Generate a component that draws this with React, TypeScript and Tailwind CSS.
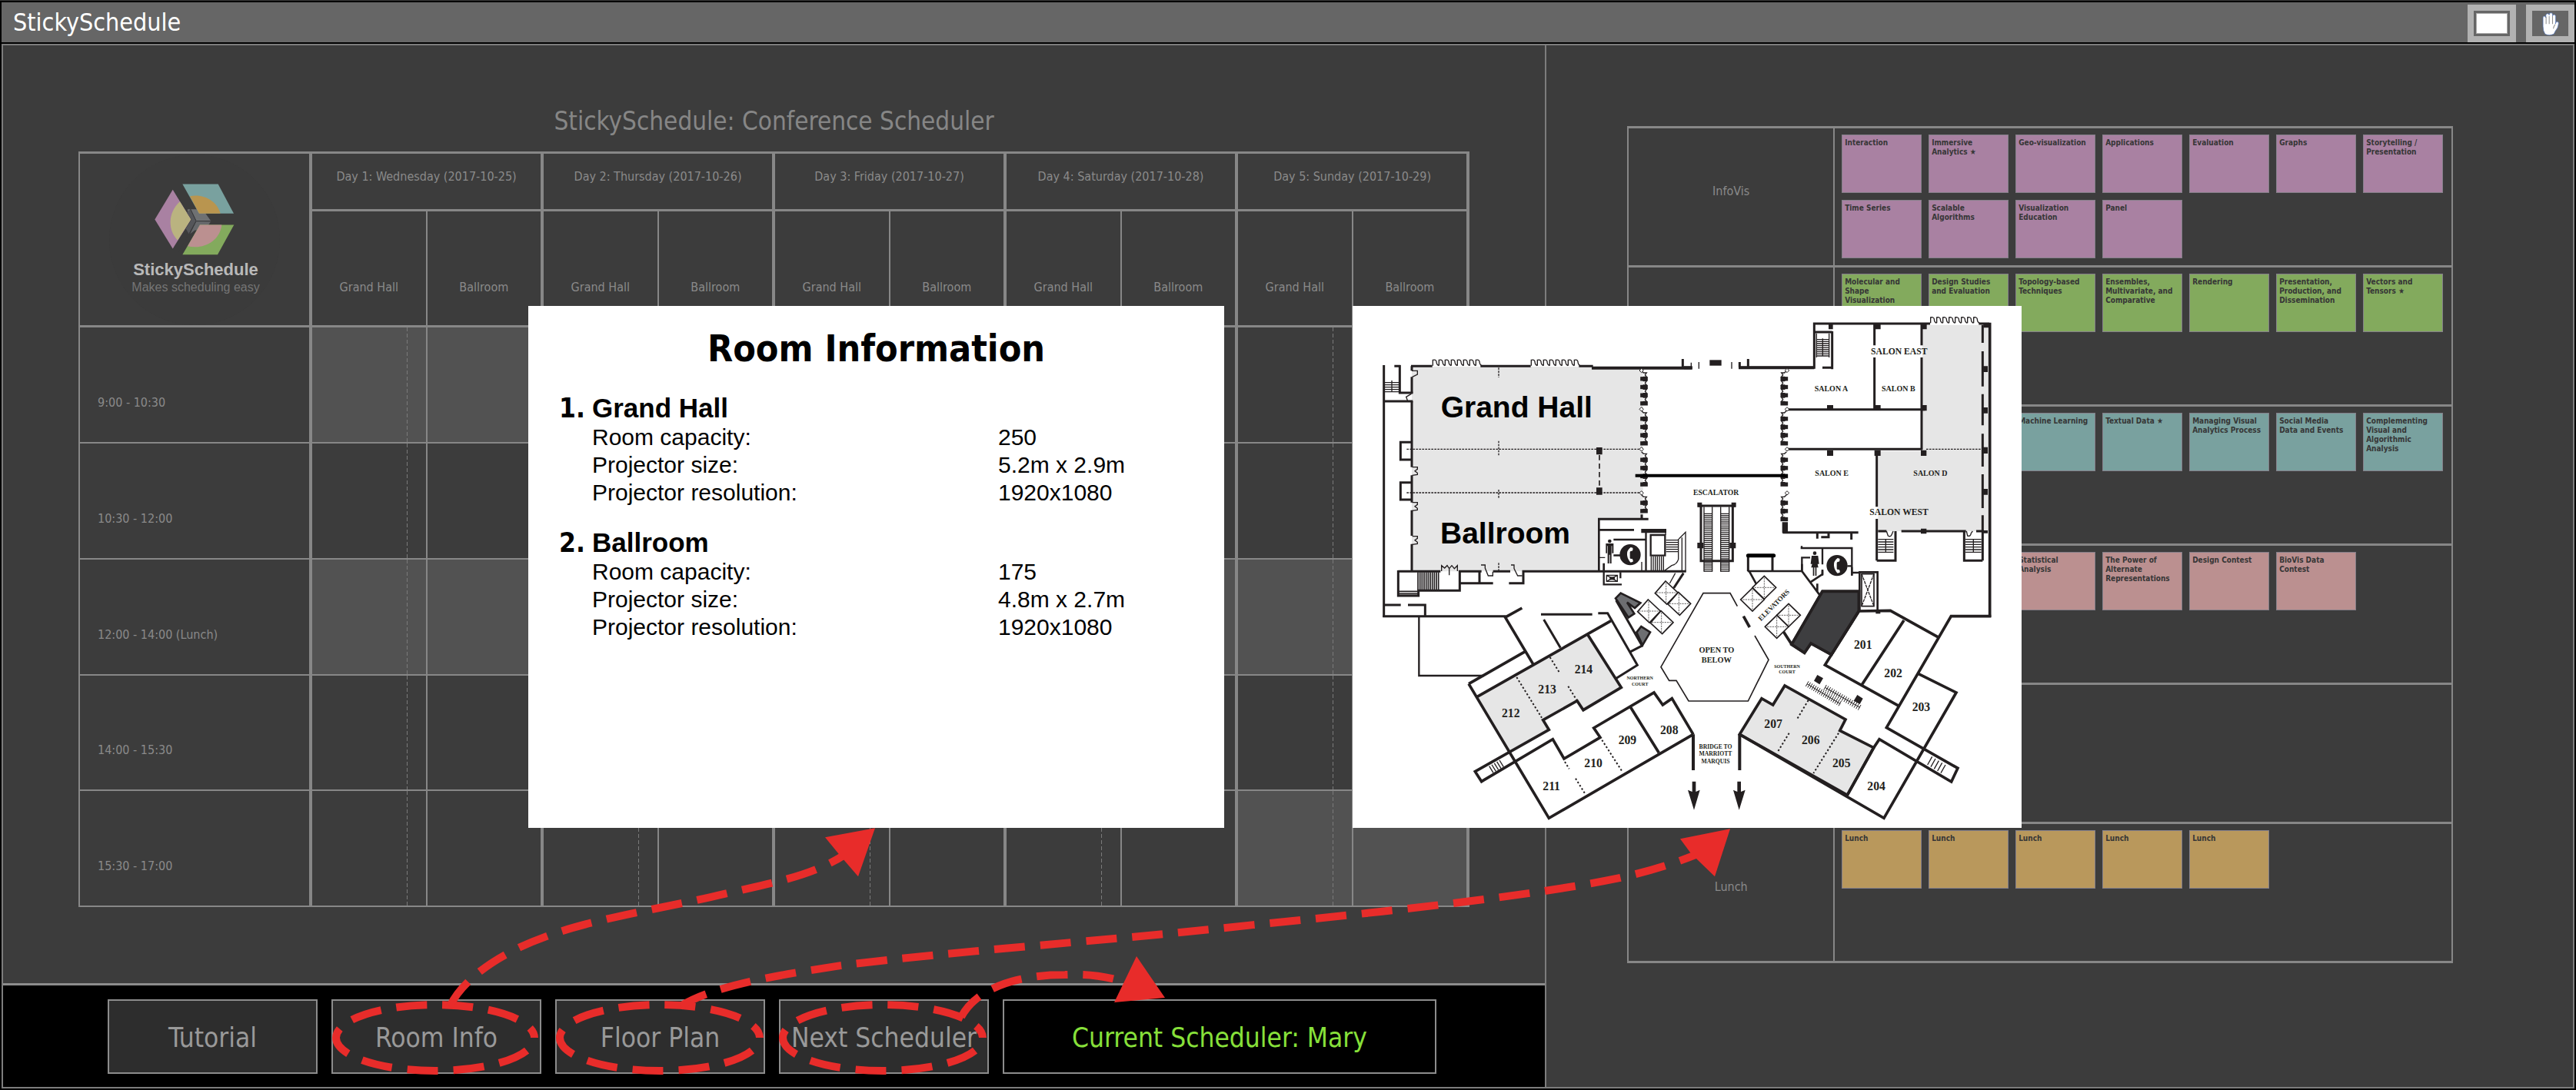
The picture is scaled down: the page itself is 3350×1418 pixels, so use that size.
import React from "react";

const INK = "#231f20";
const SHADE = "#e6e6e6";
const RED = "#e82c2a";

const days = [
  "Day 1: Wednesday (2017-10-25)",
  "Day 2: Thursday (2017-10-26)",
  "Day 3: Friday (2017-10-27)",
  "Day 4: Saturday (2017-10-28)",
  "Day 5: Sunday (2017-10-29)",
];

const slots = [
  { time: "9:00 - 10:30", blocked: [0] },
  { time: "10:30 - 12:00", blocked: [] },
  { time: "12:00 - 14:00 (Lunch)", blocked: [0, 1, 2, 3, 4] },
  { time: "14:00 - 15:30", blocked: [] },
  { time: "15:30 - 17:00", blocked: [4] },
];

const topics = [
  {
    label: "InfoVis",
    color: "bg-[#a981a2]",
    notes: [
      "Interaction", "Immersive Analytics ★", "Geo-visualization", "Applications", "Evaluation", "Graphs",
      "Storytelling / Presentation", "Time Series", "Scalable Algorithms", "Visualization Education", "Panel",
    ],
  },
  {
    label: "",
    color: "bg-[#83aa5d]",
    notes: [
      "Molecular and Shape Visualization", "Design Studies and Evaluation", "Topology-based Techniques",
      "Ensembles, Multivariate, and Comparative", "Rendering", "Presentation, Production, and Dissemination",
      "Vectors and Tensors ★",
    ],
  },
  {
    label: "",
    color: "bg-[#79a19f]",
    notes: [
      "", "", "Machine Learning", "Textual Data ★", "Managing Visual Analytics Process",
      "Social Media\nData and Events", "Complementing Visual and Algorithmic Analysis",
    ],
  },
  {
    label: "",
    color: "bg-[#bb9090]",
    notes: ["", "", "Statistical Analysis", "The Power of Alternate Representations", "Design Contest", "BioVis Data Contest"],
  },
  { label: "", color: "", notes: [] },
  { label: "Lunch", color: "bg-[#b9985c]", notes: ["Lunch", "Lunch", "Lunch", "Lunch", "Lunch"] },
];

const rooms = [
  { name: "Grand Hall", facts: [["Room capacity:", "250"], ["Projector size:", "5.2m x 2.9m"], ["Projector resolution:", "1920x1080"]] },
  { name: "Ballroom", facts: [["Room capacity:", "175"], ["Projector size:", "4.8m x 2.7m"], ["Projector resolution:", "1920x1080"]] },
];

function Logo() {
  return (
    <svg viewBox="155 65 330 284" className="h-[95px] w-[110px]" aria-hidden="true">
      <path d="M287 167h58l33 46-28 2h-70z" fill="#6f7173" />
      <path d="M298 167l22 46-28 50-24-18 14-60z" fill="#55565a" />
      <path d="M320 215h57l-22 34h-40l-18 14z" fill="#66686b" />
      <path d="M298 167l22 46h57M320 213l-26 48" fill="none" stroke="#3a3a3c" strokeWidth="3" />
      <path d="M256 122L316 222 248 340z" fill="#3b3b3b" />
      <path d="M229 91L300 207 229 321 159 207z" fill="#a981a2" />
      <path d="M257 137L300 207 248 288C210 250 208 180 257 137z" fill="#bab380" />
      <path d="M284 180l14-13 22 46-28 50-12-20 22-36z" fill="#55565a" />
      <path d="M298 167l22 46-26 48" fill="none" stroke="#3a3a3c" strokeWidth="3" />
      <path d="M267 69H406L467 184H332z" fill="#79a19f" />
      <path d="M296 116C350 105 402 135 415 184H332z" fill="#b9954f" />
      <path d="M335 228H468L404 344H267z" fill="#83aa5d" />
      <path d="M335 228H420C412 295 345 325 287 311z" fill="#bb9090" />
    </svg>
  );
}

function HandIcon() {
  return (
    <svg viewBox="343 42 74 92" className="h-[31px] w-[25px]" aria-hidden="true">
      <path
        d="M352 66q0-6 5-6t6 6V56q1-6 7-6t6 6v-3q1-6 7-6t6 6v6q1-5 6-5t6 6v24l-1 6q1-9 7-9t5 8q-1 16-12 28l-6 12q-10 4-18 4t-16-4q-8-12-8-30z"
        fill="#fff" stroke="#4a6fb5" strokeWidth="2"
      />
      <path d="M364 62v28M376 60v30M389 60v30M399 92q-6 6-7 16" fill="none" stroke="#8a8a8a" strokeWidth="3" />
    </svg>
  );
}

function Schedule() {
  return (
    <table className="h-[983px] w-full table-fixed border-collapse border-2 border-t-3 border-[#878787] text-[16px] leading-[22px] text-[#8a8a8a]">
      <colgroup>
        <col className="w-1/6" />
        {days.map((d) => (
          <React.Fragment key={d}>
            <col className="w-1/12" />
            <col className="w-1/12" />
          </React.Fragment>
        ))}
      </colgroup>
      <thead>
        <tr className="h-[75px]">
          <td rowSpan={2} className="border-r-4 border-b-3 border-[#878787] p-0">
            <div className="mx-auto flex size-[222px] flex-col items-center rounded-full bg-[#3b3b3b] pt-[37px] pl-[3px] font-['Liberation_Sans',sans-serif]">
              <Logo />
              <span className="mt-[4px] text-[22px] leading-[28px] font-bold text-[#b9b9b9]">StickySchedule</span>
              <span className="text-[16px] leading-[18px] text-[#757575]">Makes scheduling easy</span>
            </div>
          </td>
          {days.map((d) => (
            <th key={d} colSpan={2} scope="colgroup" className="border-x-4 border-b-3 border-[#878787] px-0 pt-0 pb-[12px] font-normal">
              {d}
            </th>
          ))}
        </tr>
        <tr className="h-[151px]">
          {days.map((d) => (
            <React.Fragment key={d}>
              <th scope="col" className="border-r-2 border-b-3 border-l-4 border-[#878787] px-0 pt-0 pb-[38px] align-bottom font-normal">Grand Hall</th>
              <th scope="col" className="border-r-4 border-b-3 border-l-2 border-[#878787] px-0 pt-0 pb-[38px] align-bottom font-normal">Ballroom</th>
            </React.Fragment>
          ))}
        </tr>
      </thead>
      <tbody>
        {slots.map((s) => (
          <tr key={s.time}>
            <th scope="row" className="border-r-4 border-b-2 border-[#878787] pt-0 pr-0 pb-[40px] pl-[23px] text-left align-bottom font-normal">
              {s.time}
            </th>
            {days.map((d, i) => {
              const bg = s.blocked.some((b) => b === i) ? "bg-[#525252]" : "";
              return (
                <React.Fragment key={d}>
                  <td className={`relative border-r-2 border-b-2 border-l-4 border-[#878787] p-0 ${bg}`}>
                    <span className="absolute inset-y-0 right-[24px] w-px bg-[repeating-linear-gradient(#7a7a7a_0_5px,transparent_5px_8px)]" />
                  </td>
                  <td className={`border-r-4 border-b-2 border-l-2 border-[#878787] p-0 ${bg}`} />
                </React.Fragment>
              );
            })}
          </tr>
        ))}
      </tbody>
    </table>
  );
}

function Topics() {
  return (
    <table className="w-full table-fixed border-collapse border-2 border-t-3 border-[#878787]">
      <colgroup>
        <col className="w-1/4" />
        <col />
      </colgroup>
      <tbody>
        {topics.map((t, i) => (
          <tr key={i} className="h-[181px]">
            <th scope="row" className="border-r-2 border-b-3 border-[#878787] px-0 pt-0 pb-[14px] text-[16px] leading-[22px] font-normal text-[#8a8a8a]">
              {t.label}
            </th>
            <td className="border-b-3 border-[#878787] p-0 align-top">
              <ul className="flex flex-wrap gap-[9px] pt-[8px] pl-[9px]">
                {t.notes.map((n, j) => (
                  <li key={j} className={`h-[76px] w-[104px] border border-[#85808a] px-[3px] pt-[4px] text-[10px] leading-[12px] font-bold whitespace-pre-line text-[#363636] ${t.color}`}>
                    {n}
                  </li>
                ))}
              </ul>
            </td>
          </tr>
        ))}
      </tbody>
    </table>
  );
}

function RoomInformation() {
  return (
    <section className="absolute top-[397px] left-[687px] h-[679px] w-[905px] bg-white px-[40px] pt-[22px] font-['Liberation_Sans',sans-serif] text-black">
      <h2 className="text-center font-['DejaVu_Sans_Condensed','Noto_Sans',sans-serif] text-[48px] leading-[66px] font-bold">Room Information</h2>
      <ol className="mt-[25px] flex flex-col gap-[27px]">
        {rooms.map((r, i) => (
          <li key={r.name} className="grid grid-cols-[43px_1fr]">
            <span className="font-['DejaVu_Sans_Condensed','Noto_Sans',sans-serif] text-[35px] leading-[40px] font-bold">{i + 1}.</span>
            <div>
              <h3 className="text-[35px] leading-[40px] font-bold">{r.name}</h3>
              <dl className="grid grid-cols-[528px_1fr] text-[30px] leading-[36px]">
                {r.facts.map(([k, v]) => (
                  <React.Fragment key={k}>
                    <dt>{k}</dt>
                    <dd>{v}</dd>
                  </React.Fragment>
                ))}
              </dl>
            </div>
          </li>
        ))}
      </ol>
    </section>
  );
}

/* Row of folding doors along a horizontal wall. */
function doorsH(x: number, y: number, n: number) {
  let d = "";
  for (let i = 0; i < n; i++) {
    d += `M${x + i * 24} ${y}v-22q12-3 14 6q0 12 9 16`;
  }
  return d;
}

/* Row of folding doors along a vertical wall; dir flips the swing side. */
function doorsV(x: number, y0: number, y1: number, dir: number) {
  let d = "";
  for (let y = y0; y + 30 <= y1; y += 32) {
    d += `M${x} ${y}l${dir * 8} 8h${dir * 12}l${-dir * 6} 8l${dir * 6} 8h${-dir * 12}l${-dir * 8} 6`;
  }
  return d;
}

function blocksV(x: number, y0: number, y1: number) {
  const out: number[] = [];
  for (let y = y0 + 28; y + 10 <= y1; y += 32) out.push(y);
  return out.map((y) => <rect key={y} x={x} y={y} width="20" height="7" fill={INK} />);
}

function rungsH(x0: number, x1: number, y0: number, y1: number, step: number) {
  let d = "";
  for (let y = y0; y <= y1; y += step) d += `M${x0} ${y}H${x1}`;
  return d;
}

function rungsV(x0: number, x1: number, y0: number, y1: number, step: number) {
  let d = "";
  for (let x = x0; x <= x1; x += step) d += `M${x} ${y0}V${y1}`;
  return d;
}

/* Evenly spaced ticks of vector (tx, ty) from one point to another. */
function ticks(x0: number, y0: number, x1: number, y1: number, tx: number, ty: number, n: number) {
  let d = "";
  for (let i = 0; i <= n; i++) {
    d += `M${x0 + ((x1 - x0) * i) / n} ${y0 + ((y1 - y0) * i) / n}l${tx} ${ty}`;
  }
  return d;
}

function Lift({ x, y, flip }: { x: number; y: number; flip?: boolean }) {
  return (
    <g fill="none" stroke={INK}>
      <path
        d={flip ? `M${x} ${y - 45}L${x + 46} ${y}L${x} ${y + 45}L${x - 46} ${y}Z` : `M${x - 2} ${y - 45}L${x + 46} ${y}L${x + 3} ${y + 45}L${x - 43} ${y + 2}Z`}
        fill="#fff" strokeWidth="5"
      />
      <path d={`M${x} ${y - 38}V${y + 38}M${x - 38} ${y}H${x + 38}`} strokeWidth="2" strokeDasharray="7 3" />
    </g>
  );
}

function Phone({ x, y }: { x: number; y: number }) {
  return (
    <g>
      <circle cx={x} cy={y} r="41" fill={INK} />
      <path d={`M${x + 2} ${y - 29}q-16 12-14 30t14 29l9-3q2-8-4-12q-6 3-8-3v-22q2-7 8-4q6-5 3-13z`} fill="#fff" />
    </g>
  );
}

type L = [string, number, number, number];

function Labels({ items, anchor }: { items: L[]; anchor: "start" | "middle" }) {
  return (
    <g fill={INK} fontFamily="'Liberation Serif', serif" fontWeight="700" textAnchor={anchor}>
      {items.map(([t, x, y, s]) => (
        <text key={t + x + y} x={x} y={y} fontSize={s}>{t}</text>
      ))}
    </g>
  );
}

/* The drawing uses three units per screen pixel and is split in four quadrants. */
function FloorPlan() {
  return (
    <section aria-label="Floor plan" className="absolute top-[397px] left-[1759px] h-[679px] w-[870px] bg-white">
      <svg viewBox="27 21 2610 2037" className="h-full w-full">
        {/* north-west */}
        <g fill="none" stroke={INK} strokeWidth="9">
          <path d="M258 258H960L1160 264V850H986V1057H258z" fill={SHADE} stroke="none" />
          <path d="M149 252V1236M190 256h24M211 252V360H262M149 393H262M1315 228v34" />
          <path d="M255 256H338M526 256H722M910 256H965M258 256v18M258 298v64M258 393V650M258 682V788M258 818V918M258 950V1057" />
          <path d="M960 263H1352" strokeWidth="12" />
          <path d={rungsH(150, 208, 320, 356, 9) + "M180 312V358"} strokeWidth="4" />
          <path d={doorsH(340, 254, 8) + doorsH(724, 254, 8)} strokeWidth="4" />
          <path d="M258 274h22v14l-20 10M256 364l-20 12 6 16M260 650h20v8l-10 7 10 8v6l-20 3M260 788h20v8l-10 7 10 8v6l-20 3M260 920h20v8l-10 7 10 8v6l-20 3" strokeWidth="4" />
          <path d="M256 553H214V621H256M256 710H214V777H256" />
          <path d="M238 580H1150M238 750H1150M597 262V300M597 548V608M597 738V772M597 1024V1054" strokeWidth="4" strokeDasharray="8 4" />
          <path d="M990 603V730" strokeWidth="5" strokeDasharray="20 13" />
          <path d="M978 573h23v28h-23zM978 730h23v28h-23z" fill={INK} stroke="none" />
          <path d={doorsV(1154, 274, 420, 1) + doorsV(1154, 430, 575, 1) + doorsV(1154, 590, 745, 1) + doorsV(1154, 758, 850, 1)} strokeWidth="4" />
          {blocksV(1154, 274, 420)}
          {blocksV(1154, 430, 575)}
          {blocksV(1154, 590, 745)}
          {blocksV(1154, 758, 850)}
          <path d="M1154 265l8 8-8 8-8-8zM1154 416l8 8-8 8-8-8zM1154 572l8 8-8 8-8-8zM1154 743l8 8-8 8-8-8z" fill="#fff" strokeWidth="3" />
          <path d="M1155 835V852" />
        </g>
        <g fill={INK}>
          <path d="M986 850h334v208H986z" fill="#fff" />
          <path d="M984 848h197v9H992v201h-8zM990 891h135v8H990zM1045 929h125v8h-125zM1153 891h98v16h-98zM1168 905h7v150h-7z" />
          <path d="M1190 915h56v80h-56z" fill="none" stroke={INK} strokeWidth="7" />
          <path d={rungsV(1192, 1240, 998, 1054, 8) + rungsH(1250, 1296, 935, 986, 9)} stroke={INK} strokeWidth="4" fill="none" />
          <path d="M1298 930V1010q-6 20-26 24l-28 20M1300 930l26-26V1058M1312 925V1055M1248 915v-24M988 1003h24M1155 1020v34" stroke={INK} strokeWidth="4" fill="none" />
          <circle cx="1030" cy="939" r="7" />
          <path d="M1015 948h30v38h-6v-28h-2v68h-6v-34h-3v34h-6v-68h-2v28h-5z" />
          <path d="M1045 991h30v7h-30zM1003 1025h8v30h-8z" />
        </g>
        <Phone x={1110} y={992} />

        {/* north-east */}
        <g transform="translate(1320 0)" fill="none" stroke={INK} strokeWidth="9">
          <path d="M930 95H1187V900H757V587H930z" fill={SHADE} stroke="none" />
          <path d="M213 262H508V90H960M1150 90H1190M250 228V262M217 240v20" />
          <path d="M0 262H32M213 262H508" strokeWidth="12" />
          <path d="M28 242v22M58 240v26M186 240v26" strokeWidth="4" />
          <path d="M100 232h46v22h-46z" fill={INK} stroke="none" />
          <path d={doorsH(962, 88, 8)} strokeWidth="4" />
          <path d="M1193 86V1236" strokeWidth="11" />
          <path d="M508 123H578M578 120V268M540 262H580" />
          <path d={rungsH(517, 565, 152, 218, 8) + "M517 128V222M541 148V218M566 128V222"} strokeWidth="4" />
          <path d="M743 90V175M743 222V425M927 90V175M927 222V582M405 425H940M405 580H930M752 585V805M752 852V1015" />
          <path d="M1165 95V165M1165 198V335M1165 365V487M1165 520V648M1165 678V810M1165 838V1015" />
          <path
            d="M564 90h17v22h-17zM743 90h24v22h-24zM927 90h20v22h-20zM558 408h24v20h-24zM743 408h24v20h-24zM927 408h20v22h-20zM558 584h24v22h-24zM743 584h24v22h-24zM924 584h22v22h-22zM924 890h22v20h-22zM1168 88h28v18h-28zM1165 256h20v23h-20zM1165 417h20v23h-20zM1165 572h20v25h-20zM1165 735h20v23h-20zM1165 897h20v11h-20zM383 865h22v42h-22z"
            fill={INK} stroke="none"
          />
          <path d="M945 580H1165" strokeWidth="4" strokeDasharray="8 4" />
          <path d="M757 900H790M848 900H1100M1140 900H1170M752 1015H825V900M1093 900V1015H1165M385 905H680M520 905v24M535 923h29v-18M653 905v28" />
          <path d="M790 900l6 18q10 6 14-4l6-14M1102 900l4 18q12 4 14-10l6-8" strokeWidth="4" />
          <path d={rungsH(757, 817, 932, 982, 10) + "M787 930V980" + rungsH(1098, 1160, 932, 982, 10) + "M1129 930V980"} strokeWidth="4" />
          <path d={doorsV(400, 274, 420, -1) + doorsV(400, 430, 575, -1) + doorsV(400, 590, 745, -1) + doorsV(400, 758, 870, -1)} strokeWidth="4" />
          {blocksV(381, 274, 420)}
          {blocksV(381, 430, 575)}
          {blocksV(381, 590, 745)}
          {blocksV(381, 758, 870)}
          <path d="M402 265l8 8-8 8-8-8zM402 416l8 8-8 8-8-8zM402 572l8 8-8 8-8-8zM402 743l8 8-8 8-8-8z" fill="#fff" strokeWidth="3" />
          <path d="M55 801H200M66 801V1016H190V801" />
          <path d={rungsH(78, 110, 832, 1058, 8) + rungsH(143, 176, 832, 1058, 8)} strokeWidth="4" />
          <path d="M78 805V1058M110 805V1058M143 805V1058M176 805V1058" strokeWidth="4" />
          <path d="M52 788h18v18h-18zM185 788h18v18h-18zM52 945h24v22h-24zM178 945h24v22h-24z" fill={INK} stroke="none" />
          <path d="M250 1000V1056M345 1000V1056" />
          <path d="M250 995H350" stroke="#000" strokeWidth="15" strokeLinecap="round" />
          <path d="M455 966H655V1072M459 958v8M460 1055V1003H492M540 968V1030M540 1055v18M637 1036h18" strokeWidth="7" />
          <g fill={INK} stroke="none">
            <circle cx="510" cy="986" r="7" />
            <path d="M498 996h25l4 32h-6l3 14h-7v32h-5v-32h-4v32h-5v-32h-7l4-14h-6z" />
          </g>
          <path d="M-190 683H405" stroke="#000" strokeWidth="12" />
        </g>
        <g transform="translate(1320 0)">
          <Phone x={597} y={1034} />
        </g>

        {/* south-west */}
        <g transform="translate(0 1020)" fill="none" stroke={INK} strokeWidth="9">
          <path d="M512 527L945 285 1075 490 927 578 903 542 770 617 793 655 640 745z" fill={SHADE} stroke="none" />
          <path d="M205 37H370M205 33V132H284V112H445V37H530M445 83H575M522 37V83M575 37H642M637 83H693V37H1328M284 112H370" />
          <path d={rungsV(282, 366, 40, 110, 8) + "M208 115H282M208 124H282"} strokeWidth="5" />
          <path d="M374 36V14l12 10 10-10 8 12v26M404 26l10-12 10 12 12-12v22M530 14v-2h14v12l12 30h18V38M645 12h12v14l14 28h18" strokeWidth="4" />
          <path d="M149 168H215M243 168H310V212M145 212H625" />
          <path d="M286 212V444H540" strokeWidth="7" />
          <path d="M625 215L688 180M620 212L732 400M480 476L700 350M512 527L1035 230M480 476L793 1000 1356 673" strokeWidth="11" />
          <path d="M762 205H962M985 200H1022L1138 403 1054 455M773 225L838 335" />
          <path d="M945 285L1075 490 927 578 903 542 770 617 793 655 505 818 530 857 808 692 852 768 993 685 968 648 1203 510 1237 558 1273 533 1356 673M1110 565L1222 745" strokeWidth="11" />
          <path d={ticks(560, 797, 600, 774, 16, 26, 4)} strokeWidth="4" />
          <path d="M667 450L765 608M797 372L833 430M868 485L903 542M1000 695L1080 820M855 780L872 808M897 845L933 903" strokeWidth="6" strokeDasharray="7 8" />
          <g fill="#6d6e71" strokeWidth="8">
            <path d="M1053 142L1073 122 1150 160 1128 180 1098 158 1126 202 1103 217z" />
            <path d="M1135 275L1153 252 1188 274 1158 325z" />
          </g>
          <path d="M1055 150L1155 325M1160 325L1108 352" />
          <path d="M1007 38V88H1077M1072 40V64" strokeWidth="7" />
          <path d="M1018 52h42v24h-42zM1018 52l42 24M1060 52l-42 24" strokeWidth="4" />
          <path d="M1030 58h20v12h-20z" fill={INK} stroke="none" />
          <path d="M1318 44L1280 102" />
          <path d="M1286 44L1264 84" strokeWidth="4" />
          <Lift x={1250} y={120} />
          <Lift x={1300} y={163} />
          <Lift x={1182} y={192} />
          <Lift x={1232} y={236} />
        </g>

        {/* south-east */}
        <g transform="translate(1320 1020)" fill="none" stroke={INK} strokeWidth="11">
          <path d="M217 673L303 533 347 558 393 483 630 615 608 658 740 725 637 910z" fill={SHADE} />
          <path d="M208 173L180 122H75L-90 410-58 463H-30L18 543H250L330 382 276 288" strokeWidth="5" />
          <path d="M232 212L256 255" />
          <path d="M248 36H463M460 8V36L530 130M255 37L283 88M492 80L540 48V30M520 85V115" strokeWidth="8" />
          <path d="M388 272L422 325M540 115H682V192L575 362 495 318 470 355 420 322z" />
          <path d="M540 115H682V192L575 362 495 318 470 355 420 322z" fill="#3e3e40" />
          <path d="M655 42H685M655 20V54" strokeWidth="7" />
          <path d="M685 190V40H755V195" strokeWidth="8" />
          <path d="M693 47h48v126h-48z" strokeWidth="5" />
          <path d="M693 47l48 126M741 47l-48 126" strokeWidth="4" strokeDasharray="12 3" />
          <path d="M748 186h18v16h-18z" fill={INK} stroke="none" />
          <path d="M1198 212H1042L790 647 1068 805 1043 858 762 692 740 725 637 910M682 192L805 190 990 293M682 192L550 402 838 562M858 228L695 478M915 437L1062 510 780 1000 217 673" />
          <path d={ticks(968, 760, 1020, 792, -18, 32, 4)} strokeWidth="4" />
          <path d="M485 540L440 615M410 668L365 742M603 668L505 825" strokeWidth="6" strokeDasharray="7 8" />
          <path d={ticks(486, 466, 614, 542, -11, 20, 17) + ticks(556, 480, 690, 558, -11, 20, 17) + "M480 476L610 554M550 490L686 568"} strokeWidth="3" />
          <path d="M520 441l23 13-14 24-22-14zM676 519l22 14-12 22-24-13z" fill={INK} stroke="none" />
          <path d="M36 673V813M217 673V813" strokeWidth="12" />
          <path d="M32 857h14v40l16-7-23 78-24-78 17 7zM208 857h14v40l17-7-24 78-23-78 16 7z" fill={INK} stroke="none" />
          <Lift x={313} y={100} flip />
          <Lift x={267} y={147} flip />
          <Lift x={408} y={208} flip />
          <Lift x={362} y={253} flip />
        </g>

        <g fontFamily="'Liberation Sans', sans-serif" fontWeight="700" fontSize="117" fill="#000">
          <text x="371" y="457">Grand Hall</text>
          <text x="369" y="947">Ballroom</text>
        </g>
        <Labels
          anchor="start"
          items={[
            ["SALON EAST", 2049, 210, 35], ["SALON A", 1829, 355, 30], ["SALON B", 2091, 355, 30],
            ["SALON E", 1831, 683, 30], ["SALON D", 2215, 683, 30], ["SALON WEST", 2044, 836, 35],
            ["ESCALATOR", 1356, 760, 29],
            ["214", 893, 1455, 47], ["213", 751, 1532, 47], ["212", 609, 1626, 47], ["208", 1227, 1693, 47],
            ["209", 1064, 1732, 47], ["210", 931, 1822, 47], ["211", 769, 1912, 47],
            ["201", 1983, 1359, 47], ["202", 2101, 1470, 47], ["203", 2210, 1601, 47], ["207", 1633, 1667, 47],
            ["206", 1779, 1732, 47], ["205", 1899, 1822, 47], ["204", 2035, 1912, 47],
          ]}
        />
        <Labels
          anchor="middle"
          items={[
            ["NORTHERN", 1148, 1479, 18], ["COURT", 1148, 1502, 18], ["SOUTHERN", 1722, 1433, 18], ["COURT", 1722, 1456, 18],
            ["OPEN TO", 1447, 1375, 31], ["BELOW", 1447, 1414, 31],
            ["BRIDGE TO", 1443, 1748, 23], ["MARRIOTT", 1443, 1777, 23], ["MARQUIS", 1443, 1806, 23],
          ]}
        />
        <text
          x="1620" y="1252" transform="rotate(-45 1620 1252)" fontSize="27" fontWeight="700"
          fontFamily="'Liberation Serif', serif" fill={INK}
        >
          ELEVATORS
        </text>
      </svg>
    </section>
  );
}

function Annotations() {
  return (
    <svg viewBox="0 0 3350 1418" preserveAspectRatio="none" className="pointer-events-none absolute inset-0 h-full w-full" aria-hidden="true">
      <g fill="none" stroke={RED} strokeWidth="10" strokeDasharray="40 20">
        <ellipse cx="566" cy="1350" rx="129" ry="43" strokeDashoffset="40" />
        <ellipse cx="858" cy="1350" rx="130" ry="43" strokeDashoffset="40" />
        <ellipse cx="1148" cy="1350" rx="130" ry="43" strokeDashoffset="40" />
        <path d="M585 1309C604 1270 655 1238 708 1219C770 1195 870 1180 941 1163C1000 1149 1055 1140 1098 1112" />
        <path d="M885 1309C930 1280 1030 1266 1093 1256C1250 1236 1440 1224 1630 1203C1790 1187 1990 1166 2106 1142C2150 1132 2180 1122 2210 1110" strokeDashoffset="3" />
        <path d="M1250 1323C1266 1292 1310 1268 1385 1268C1410 1267 1430 1268 1462 1277" strokeDashoffset="4" />
      </g>
      <g fill={RED}>
        <path d="M1138 1077L1073 1089 1091 1111 1116 1140z" />
        <path d="M2250 1078L2185 1091 2199 1110 2230 1140z" />
        <path d="M1478 1244L1449 1304 1515 1298z" />
      </g>
    </svg>
  );
}

export default function App() {
  return (
    <div className="relative flex min-h-screen flex-col gap-[2px] border-t border-[#3a3a3a] bg-black px-[2px] pt-[2px] pb-[2px] font-['DejaVu_Sans_Condensed','Noto_Sans',sans-serif]">
      <header className="flex h-[52px] items-center justify-between bg-[#666] pl-[15px]">
        <h1 className="text-[32px] leading-[44px] text-white">StickySchedule</h1>
        <div className="flex gap-[13px] pt-[2px]">
          <button type="button" aria-label="Screen" className="flex h-[49px] w-[63px] items-center justify-center bg-[#b2b2b2]">
            <span className="flex h-[33px] w-[47px] items-center justify-center bg-[#666]">
              <span className="h-[27px] w-[41px] border border-[#aaa] bg-white" />
            </span>
          </button>
          <button type="button" aria-label="Pan" className="flex h-[49px] w-[63px] items-center justify-center bg-[#b2b2b2]">
            <span className="flex h-[33px] w-[47px] items-center justify-center bg-[#666]">
              <HandIcon />
            </span>
          </button>
        </div>
      </header>

      <main className="grid flex-1 grid-cols-[3fr_2fr] border-2 border-[#7d7d7d] bg-[#3c3c3c]">
        <div className="flex min-w-0 flex-col">
          <section className="flex-1 px-[98px] pt-[75px]">
            <h2 className="mb-[15px] text-center text-[33px] leading-[48px] text-[#868686]">StickySchedule: Conference Scheduler</h2>
            <Schedule />
          </section>
          <footer className="flex h-[135px] items-center gap-[18px] border-t-3 border-[#8c8c8c] bg-black pl-[136px] text-[35px] leading-[50px] text-[#999]">
            {["Tutorial", "Room Info", "Floor Plan", "Next Scheduler"].map((b) => (
              <button key={b} type="button" className="h-[97px] w-[273px] border-2 border-[#8c8c8c] bg-[#2d2d2d] pt-[4px] whitespace-nowrap">
                {b}
              </button>
            ))}
            <output className="flex h-[97px] w-[564px] items-center justify-center border-2 border-[#8c8c8c] pt-[4px] text-[#87e03a]">
              Current Scheduler: Mary
            </output>
          </footer>
        </div>
        <aside className="min-w-0 border-l-2 border-[#7d7d7d] pt-[105px] pr-[156px] pl-[105px]">
          <Topics />
        </aside>
      </main>

      <RoomInformation />
      <FloorPlan />
      <Annotations />
    </div>
  );
}
